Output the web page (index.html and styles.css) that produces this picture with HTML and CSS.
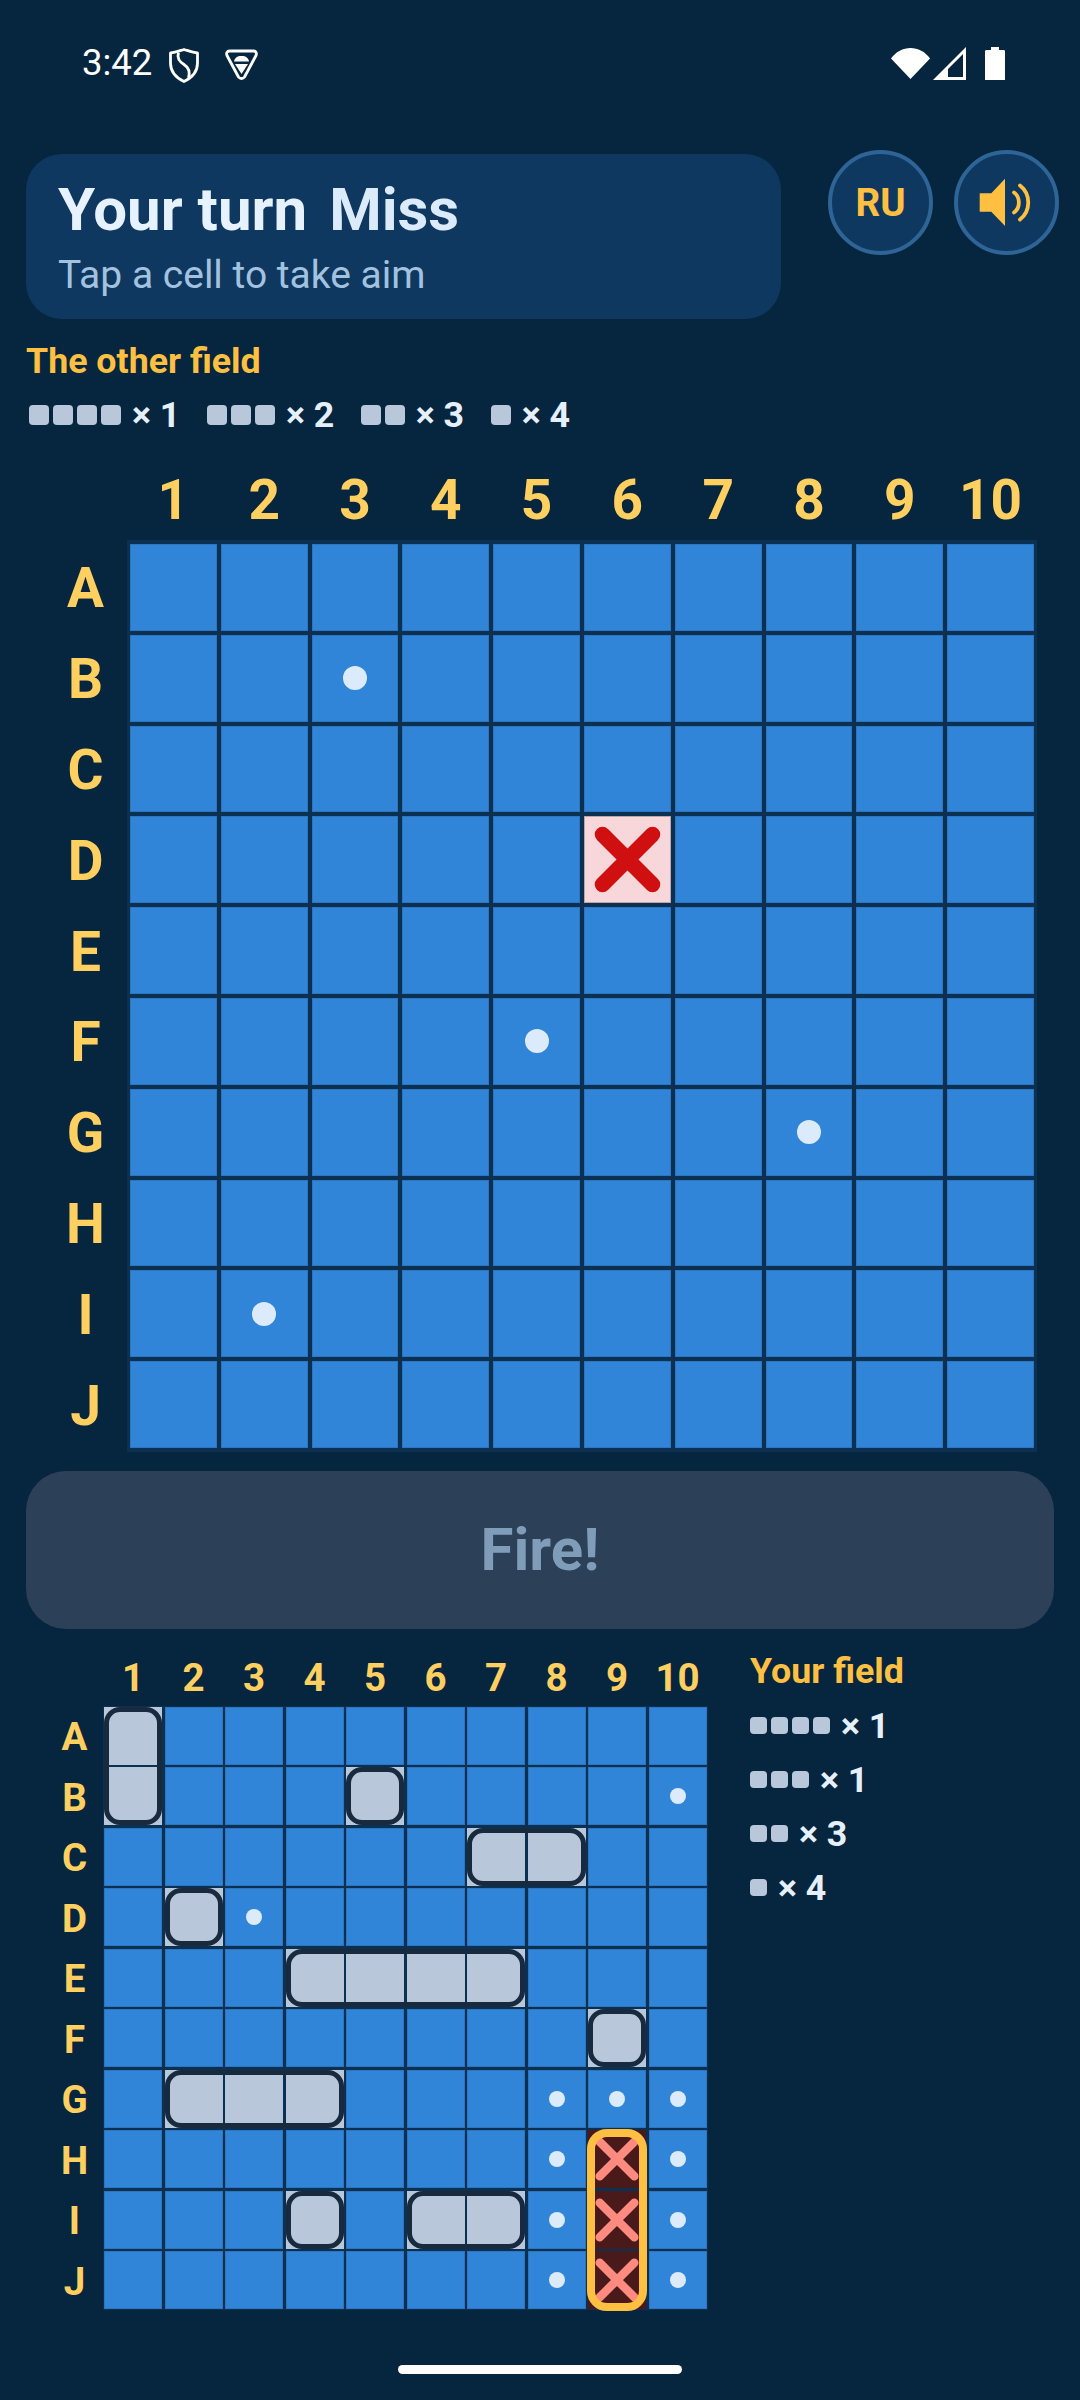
FILE: index.html
```html
<!DOCTYPE html>
<html lang="en">
<head>
<meta charset="utf-8">
<title>Your turn</title>
<link rel="stylesheet" href="styles.css">
</head>
<body>
<svg class="defs" width="0" height="0" aria-hidden="true">
  <symbol id="hit" viewBox="0 0 87 87"><path d="M18.500 18.500L68.500 68.500M68.500 18.500L18.500 68.500" fill="none" stroke="#d01010" stroke-width="15.500" stroke-linecap="round"/></symbol>
  <symbol id="sunk" viewBox="0 0 58 58"><path d="M11.700 11.700L46.300 46.300M46.300 11.700L11.700 46.300" fill="none" stroke="#ff8a80" stroke-width="8.500" stroke-linecap="round"/></symbol>
</svg>
<div class="page">
  <div class="status">
    <div class="status-left">
      <span class="time">3:42</span>
      <svg class="ic-shield" viewBox="0 0 30 35"><path d="M15 1.500C20 3 24 4.500 28.500 5V15C28.500 24 22.500 30 15 33.500C7.500 30 1.500 24 1.500 15V5C6 4.500 10 3 15 1.500Z" fill="none" stroke="#fff" stroke-width="2.800" stroke-linejoin="round"/><path d="M9.500 4.500C7.500 11 11 14 15 16.500C19 19 21.500 23 19.500 30" fill="none" stroke="#fff" stroke-width="2.800"/></svg>
      <svg class="ic-tri" viewBox="0 0 33 31"><path d="M4.500 2H28.500C31 2 32 4 31 6.500L19.500 28C18 30 15 30 13.500 28L2 6.500C1 4 2 2 4.500 2Z" fill="none" stroke="#fff" stroke-width="2.800" stroke-linejoin="round"/><path d="M9 12.500C9.500 9 12 7 16.500 7C21 7 23.500 9 24 12.500Z" fill="#fff"/><path d="M10 15H23L16.500 25Z" fill="#fff"/></svg>
    </div>
    <div class="status-right">
      <svg class="ic-wifi" viewBox="0 0 39 32"><path d="M0 11.500C5 4.500 12 1 19.500 1C27 1 34 4.500 39 11.500L19.500 32Z" fill="#fff"/></svg>
      <svg class="ic-signal" viewBox="0 0 33 33"><path fill-rule="evenodd" d="M33 0V33H0ZM30 7L15 22V30H30Z" fill="#fff"/></svg>
      <svg class="ic-batt" viewBox="0 0 20 33"><path d="M6 0H14V3H18.500C19.500 3 20 3.500 20 4.500V33H0V4.500C0 3.500 0.500 3 1.500 3H6Z" fill="#fff"/></svg>
    </div>
  </div>

  <div class="top">
    <div class="hero">
      <div class="hero-title"><span>Your turn</span><span class="miss">Miss</span></div>
      <div class="hero-sub">Tap a cell to take aim</div>
    </div>
    <div class="top-btns">
      <div class="round">RU</div>
      <div class="round">
        <svg class="ic-sound" viewBox="4 4 97 97"><path d="M25.700 43.300H37.300L51 28.700V76L37.300 61.700H25.700Z" fill="#ffc042"/><path d="M60 42.500C66.500 47 66.500 58 60 62.500M66 35.500C77 44 77 61 66 69.500" fill="none" stroke="#ffc042" stroke-width="3.800" stroke-linecap="round"/></svg>
      </div>
    </div>
  </div>

  <div class="field-title">The other field</div>
  <div class="legend">
    <div class="leg"><i class="sq"></i><i class="sq"></i><i class="sq"></i><i class="sq"></i><span class="count">× 1</span></div>
    <div class="leg"><i class="sq"></i><i class="sq"></i><i class="sq"></i><span class="count">× 2</span></div>
    <div class="leg"><i class="sq"></i><i class="sq"></i><span class="count">× 3</span></div>
    <div class="leg"><i class="sq"></i><span class="count">× 4</span></div>
  </div>

  <div class="board big">
    <div class="corner"></div>
    <div class="cols"><span>1</span><span>2</span><span>3</span><span>4</span><span>5</span><span>6</span><span>7</span><span>8</span><span>9</span><span>10</span></div>
    <div class="rows"><span>A</span><span>B</span><span>C</span><span>D</span><span>E</span><span>F</span><span>G</span><span>H</span><span>I</span><span>J</span></div>
    <div class="field">
      <div class="cells">
        <b></b><b></b><b></b><b></b><b></b><b></b><b></b><b></b><b></b><b></b>
        <b></b><b></b><b><i class="dot"></i></b><b></b><b></b><b></b><b></b><b></b><b></b><b></b>
        <b></b><b></b><b></b><b></b><b></b><b></b><b></b><b></b><b></b><b></b>
        <b></b><b></b><b></b><b></b><b></b><b class="hit"><svg class="mark"><use href="#hit"/></svg></b><b></b><b></b><b></b><b></b>
        <b></b><b></b><b></b><b></b><b></b><b></b><b></b><b></b><b></b><b></b>
        <b></b><b></b><b></b><b></b><b><i class="dot"></i></b><b></b><b></b><b></b><b></b><b></b>
        <b></b><b></b><b></b><b></b><b></b><b></b><b></b><b><i class="dot"></i></b><b></b><b></b>
        <b></b><b></b><b></b><b></b><b></b><b></b><b></b><b></b><b></b><b></b>
        <b></b><b><i class="dot"></i></b><b></b><b></b><b></b><b></b><b></b><b></b><b></b><b></b>
        <b></b><b></b><b></b><b></b><b></b><b></b><b></b><b></b><b></b><b></b>
      </div>
    </div>
  </div>

  <button class="fire" type="button">Fire!</button>

  <div class="lower">
    <div class="board small">
      <div class="corner"></div>
      <div class="cols"><span>1</span><span>2</span><span>3</span><span>4</span><span>5</span><span>6</span><span>7</span><span>8</span><span>9</span><span>10</span></div>
      <div class="rows"><span>A</span><span>B</span><span>C</span><span>D</span><span>E</span><span>F</span><span>G</span><span>H</span><span>I</span><span>J</span></div>
      <div class="field">
        <div class="cells">
          <b class="ship"></b><b></b><b></b><b></b><b></b><b></b><b></b><b></b><b></b><b></b>
          <b class="ship"></b><b></b><b></b><b></b><b class="ship"></b><b></b><b></b><b></b><b></b><b><i class="dot"></i></b>
          <b></b><b></b><b></b><b></b><b></b><b></b><b class="ship"></b><b class="ship"></b><b></b><b></b>
          <b></b><b class="ship"></b><b><i class="dot"></i></b><b></b><b></b><b></b><b></b><b></b><b></b><b></b>
          <b></b><b></b><b></b><b class="ship"></b><b class="ship"></b><b class="ship"></b><b class="ship"></b><b></b><b></b><b></b>
          <b></b><b></b><b></b><b></b><b></b><b></b><b></b><b></b><b class="ship"></b><b></b>
          <b></b><b class="ship"></b><b class="ship"></b><b class="ship"></b><b></b><b></b><b></b><b><i class="dot"></i></b><b><i class="dot"></i></b><b><i class="dot"></i></b>
          <b></b><b></b><b></b><b></b><b></b><b></b><b></b><b><i class="dot"></i></b><b class="sunk"><svg class="mark"><use href="#sunk"/></svg></b><b><i class="dot"></i></b>
          <b></b><b></b><b></b><b class="ship"></b><b></b><b class="ship"></b><b class="ship"></b><b><i class="dot"></i></b><b class="sunk"><svg class="mark"><use href="#sunk"/></svg></b><b><i class="dot"></i></b>
          <b></b><b></b><b></b><b></b><b></b><b></b><b></b><b><i class="dot"></i></b><b class="sunk"><svg class="mark"><use href="#sunk"/></svg></b><b><i class="dot"></i></b>
        </div>
        <div class="ships">
          <div class="outline s-a1"></div>
          <div class="outline s-b5"></div>
          <div class="outline s-c7"></div>
          <div class="outline s-d2"></div>
          <div class="outline s-e4"></div>
          <div class="outline s-f9"></div>
          <div class="outline s-g2"></div>
          <div class="outline s-i4"></div>
          <div class="outline s-i6"></div>
          <div class="outline-sunk"></div>
        </div>
      </div>
    </div>
    <div class="panel">
      <div class="field-title flush">Your field</div>
      <div class="panel-legend">
        <div class="leg"><i class="sq"></i><i class="sq"></i><i class="sq"></i><i class="sq"></i><span class="count">× 1</span></div>
        <div class="leg"><i class="sq"></i><i class="sq"></i><i class="sq"></i><span class="count">× 1</span></div>
        <div class="leg"><i class="sq"></i><i class="sq"></i><span class="count">× 3</span></div>
        <div class="leg"><i class="sq"></i><span class="count">× 4</span></div>
      </div>
    </div>
  </div>

  <div class="nav"><div class="pill"></div></div>
</div>
</body>
</html>
```

FILE: styles.css
```css
* { box-sizing: border-box; }
html, body { margin: 0; padding: 0; }
body {
  width: 1080px;
  height: 2400px;
  overflow: hidden;
  background: #06263f;
  font-family: Roboto, "Liberation Sans", sans-serif;
  color: #e6f0fc;
}
.defs { position: absolute; }
.page { display: flex; flex-direction: column; height: 2400px; }

/* status bar */
.status {
  height: 126px;
  display: flex;
  align-items: center;
  justify-content: space-between;
  padding: 0 75px 0 82px;
}
.status-left { display: flex; align-items: center; }
.status-right { display: flex; align-items: center; }
.time { font-size: 36.500px; color: #fff; width: 87px; line-height: 40px; }
.ic-shield { width: 30px; height: 35px; margin-top: 5px; }
.ic-tri { width: 33px; height: 31px; margin-left: 26px; margin-top: 2px; }
.ic-wifi { width: 39px; height: 32px; }
.ic-signal { width: 33px; height: 33px; margin-left: 3px; }
.ic-batt { width: 20px; height: 33px; margin-left: 19px; }

/* header */
.top {
  margin-top: 24px;
  padding: 0 21px 0 26px;
  display: flex;
  justify-content: space-between;
  align-items: flex-start;
}
.hero {
  width: 755px;
  height: 165px;
  margin-top: 4px;
  padding: 24px 32px 0;
  border-radius: 36px;
  background: #0f3860;
}
.hero-title {
  display: flex;
  gap: 22px;
  font-size: 60px;
  font-weight: 700;
  line-height: 64px;
  color: #e6f2ff;
}
.miss { color: #dcebfb; }
.hero-sub { font-size: 39px; line-height: 46px; margin-top: 10px; color: #a3c2df; }
.top-btns { display: flex; gap: 21px; }
.round {
  width: 105px;
  height: 105px;
  border-radius: 50%;
  border: 4px solid #2f6496;
  background: #0f3860;
  display: flex;
  align-items: center;
  justify-content: center;
  font-size: 38.500px;
  font-weight: 700;
  color: #ffc042;
}
.ic-sound { width: 97px; height: 97px; }

/* legend */
.field-title {
  margin: 20px 0 0 26px;
  font-size: 35.750px;
  font-weight: 700;
  line-height: 44px;
  color: #ffc042;
}
.field-title.flush { margin: 1px 0 0; }
.legend {
  margin: 12px 0 0 29px;
  height: 40px;
  display: flex;
  gap: 26.500px;
}
.leg { display: flex; align-items: center; gap: 4px; height: 40px; }
.sq {
  width: 20px;
  height: 20px;
  border-radius: 4px;
  background: #b8c7d9;
}
.count {
  margin-left: 7px;
  font-size: 35.750px;
  font-weight: 700;
  line-height: 40px;
  color: #e6f0fc;
}

/* boards */
.board { display: grid; }
.big {
  margin: 31px 0 0 44px;
  grid-template-columns: 83px auto;
  grid-template-rows: 74px auto;
  width: 993px;
}
.cols, .rows { display: grid; font-weight: 700; color: #ffd060; text-align: center; }
.rows span { display: flex; align-items: center; justify-content: center; }
.cols span { display: flex; align-items: center; justify-content: center; }
.big .cols {
  grid-template-columns: repeat(10, 86.800px);
  column-gap: 4px;
  padding: 0 3px 7px;
  font-size: 55px;
}
.big .rows {
  grid-template-rows: repeat(10, 86.800px);
  row-gap: 4px;
  padding: 5px 0 3px;
  font-size: 55px;
}
.field { display: grid; background: #0b3052; }
.field > * { grid-area: 1 / 1; }
.cells, .ships { display: grid; }
.big .field { padding: 4px 3px; }
.big .cells {
  grid-template-columns: repeat(10, 86.800px);
  grid-auto-rows: 86.800px;
  gap: 4px;
}
.cells b {
  display: flex;
  align-items: center;
  justify-content: center;
  background: #3085d8;
  border: 1px solid #2c76c0;
}
.dot { display: block; border-radius: 50%; background: #dcebfb; }
.big .dot { width: 24px; height: 24px; }
.small .dot { width: 16px; height: 16px; }
.cells b.hit { background: #f8d7da; border-color: #b9a5ac; }
.big .mark { width: 87px; height: 87px; flex: none; }
.small .mark { width: 58px; height: 58px; flex: none; }

/* fire button */
.fire {
  margin: 19px 26px 0;
  width: 1028px;
  height: 158px;
  padding: 0;
  border: 0;
  border-radius: 40px;
  background: #2c4058;
  font-family: inherit;
  font-size: 60px;
  font-weight: 700;
  color: #7f9db9;
}

/* lower section */
.lower {
  margin-top: 19px;
  padding-left: 46px;
  display: flex;
  align-items: flex-start;
}
.small {
  grid-template-columns: 57px auto;
  grid-template-rows: 58px auto;
}
.small .cols {
  grid-template-columns: repeat(10, 58px);
  column-gap: 2.500px;
  padding: 8px 1px 6px;
  font-size: 38.500px;
  line-height: 44px;
}
.small .rows {
  grid-template-rows: repeat(10, 58px);
  row-gap: 2.500px;
  padding: 2px 0 0;
  font-size: 38.500px;
}
.small .field { padding: 1px; }
.small .cells, .ships {
  grid-template-columns: repeat(10, 58px);
  grid-template-rows: repeat(10, 58px);
  gap: 2.500px;
}
.cells b.ship { background: #b8c7d9; border: 0; }
.cells b.sunk { background: #4a1a1a; border: 0; }
.outline { border: 5px solid #182a3d; border-radius: 16px; }
.s-a1 { grid-area: 1 / 1 / 3 / 2; }
.s-b5 { grid-area: 2 / 5 / 3 / 6; }
.s-c7 { grid-area: 3 / 7 / 4 / 9; }
.s-d2 { grid-area: 4 / 2 / 5 / 3; }
.s-e4 { grid-area: 5 / 4 / 6 / 8; }
.s-f9 { grid-area: 6 / 9 / 7 / 10; }
.s-g2 { grid-area: 7 / 2 / 8 / 5; }
.s-i4 { grid-area: 9 / 4 / 10 / 5; }
.s-i6 { grid-area: 9 / 6 / 10 / 8; }
.outline-sunk {
  grid-area: 8 / 9 / 11 / 10;
  margin: -1.500px -1px;
  border: 8px solid #ffc042;
  border-radius: 20px;
}
.panel { margin-left: 42.500px; }
.panel-legend { display: flex; flex-direction: column; gap: 14px; margin-top: 13px; }
.panel .leg { gap: 4px; }
.panel .sq { width: 17px; height: 17px; }
.panel .count { margin-left: 7px; }

/* nav */
.nav { flex: 1; display: flex; justify-content: center; align-items: flex-start; padding-top: 55px; }
.pill { width: 284px; height: 9px; border-radius: 5px; background: #fff; }
```
